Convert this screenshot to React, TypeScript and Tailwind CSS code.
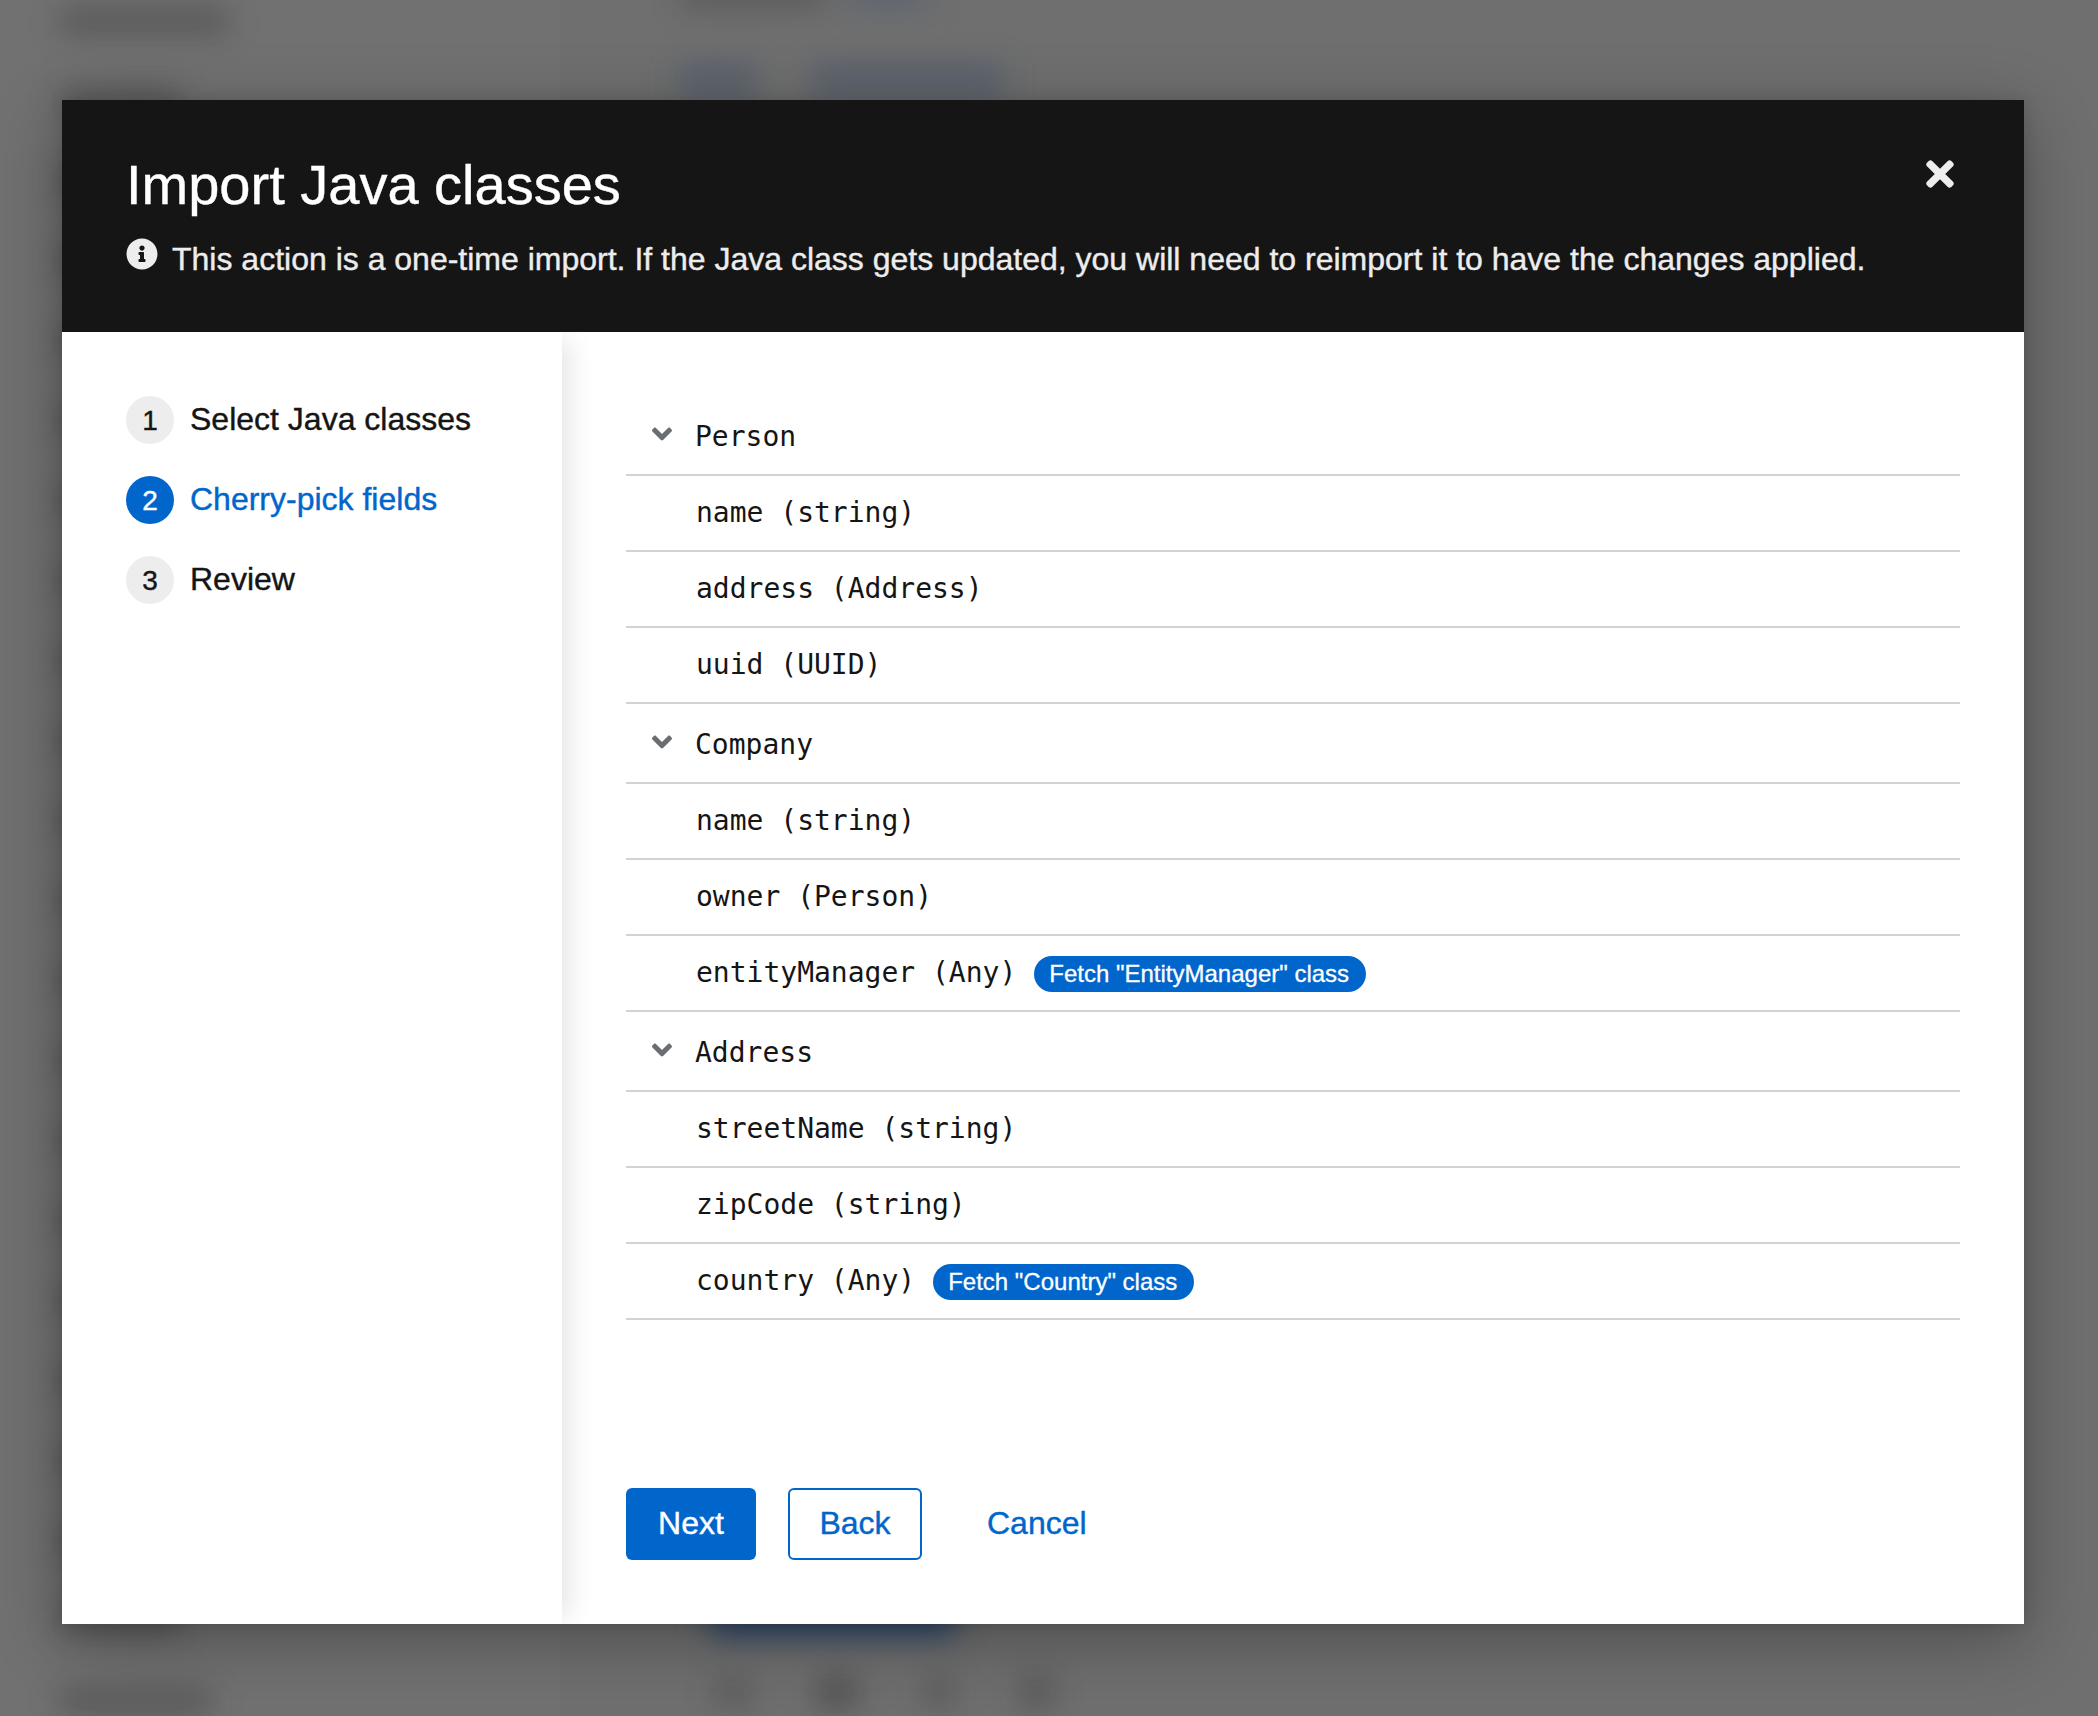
import { FaAngleDown, FaInfoCircle, FaTimes } from "react-icons/fa";

type Field = { label: string; fetch?: string };
type JavaClass = { name: string; fields: Field[] };

const classes: JavaClass[] = [
  {
    name: "Person",
    fields: [{ label: "name (string)" }, { label: "address (Address)" }, { label: "uuid (UUID)" }],
  },
  {
    name: "Company",
    fields: [
      { label: "name (string)" },
      { label: "owner (Person)" },
      { label: "entityManager (Any)", fetch: 'Fetch "EntityManager" class' },
    ],
  },
  {
    name: "Address",
    fields: [
      { label: "streetName (string)" },
      { label: "zipCode (string)" },
      { label: "country (Any)", fetch: 'Fetch "Country" class' },
    ],
  },
];

const steps = ["Select Java classes", "Cherry-pick fields", "Review"];
const activeStep = 1;

// Widths of the navigation entries in the page behind the dialog.
const navWidths = [
  168, 118, 150, 120, 140, 150, 130, 150, 120, 160, 140, 130, 150, 120, 160, 140, 150, 130, 150, 130, 120, 150,
];

function Backdrop() {
  return (
    <div className="absolute inset-0 flex overflow-hidden bg-[#717171]">
      <div className="w-[560px] shrink-0 pl-[60px] blur-[15px]">
        {navWidths.map((width, i) => (
          <div key={i} className="h-20 pt-2">
            <div className="h-[26px] bg-[#151515]/28" style={{ width }} />
          </div>
        ))}
      </div>
      <div className="relative flex-1 bg-black/[0.012]">
        <div className="flex h-full flex-col justify-between pl-[120px] blur-[15px]">
          <div>
            <div className="-mt-3 flex gap-5">
              <div className="h-4 w-[145px] bg-[#151515]/35" />
              <div className="h-4 w-[85px] bg-[#39506f]/50" />
            </div>
            <div className="mt-[60px] flex gap-[56px]">
              <div className="h-[34px] w-[76px] bg-[#3a4f69]/45" />
              <div className="h-[34px] w-[190px] bg-[#3a4f69]/45" />
            </div>
          </div>
          <div>
            <div className="ml-[30px] h-[70px] w-[246px] bg-[#1b3d66]/80" />
            <div className="mt-[40px] mb-[8px] ml-9 flex gap-[68px]">
              <div className="h-[32px] w-[34px] bg-[#151515]/22" />
              <div className="h-[32px] w-[38px] bg-[#151515]/34" />
              <div className="h-[32px] w-[30px] bg-[#151515]/22" />
              <div className="h-[32px] w-[30px] bg-[#151515]/28" />
            </div>
          </div>
        </div>
      </div>
    </div>
  );
}

export default function App() {
  return (
    <div className="relative h-[1716px] w-[2098px] overflow-hidden pt-[100px] pl-[62px] font-['Liberation_Sans',sans-serif] text-[#151515] [-webkit-text-stroke:0.4px]">
      <Backdrop />
      <div
        role="dialog"
        className="relative flex h-[1524px] w-[1962px] flex-col bg-white shadow-[0_16px_64px_rgba(3,3,3,0.3),0_0_14px_rgba(3,3,3,0.12)]"
      >
        <header className="flex h-[232px] shrink-0 justify-between bg-[#151515] pr-16 pl-16">
          <div>
            <h2 className="mt-12 text-[56px] leading-[73px] text-white">Import Java classes</h2>
            <div className="mt-[14px] flex items-start text-[32px] leading-[48px] text-[#ededed]">
              <FaInfoCircle className="mt-[3px] mr-[14px] size-8" />
              <p className="whitespace-nowrap">
                This action is a one-time import. If the Java class gets updated, you will need to reimport it to have
                the changes applied.
              </p>
            </div>
          </div>
          <button aria-label="Close" className="mt-[54px] h-10 text-[40px] text-[#ededed]">
            <FaTimes />
          </button>
        </header>
        <div className="flex min-h-0 flex-1 overflow-hidden">
          <nav className="w-[500px] shrink-0 bg-white pt-16 pl-16 shadow-[16px_0_24px_-8px_rgba(3,3,3,0.1)]">
            <ol className="flex flex-col gap-8">
              {steps.map((step, i) => (
                <li key={step} className="flex h-12 gap-4">
                  <span
                    className={
                      i === activeStep
                        ? "flex size-12 items-center justify-center rounded-full bg-[#0066cc] pt-px text-[28px] text-white"
                        : "flex size-12 items-center justify-center rounded-full bg-[#ededed] pt-px text-[28px]"
                    }
                  >
                    {i + 1}
                  </span>
                  <span
                    className={
                      i === activeStep ? "text-[32px] leading-[46px] text-[#0066cc]" : "text-[32px] leading-[46px]"
                    }
                  >
                    {step}
                  </span>
                </li>
              ))}
            </ol>
          </nav>
          <main className="flex flex-1 flex-col px-16 pt-16 pb-16">
            <div className="flex-1 font-['DejaVu_Sans_Mono',monospace] text-[28px] [-webkit-text-stroke:0]">
              {classes.map((cls) => (
                <section key={cls.name}>
                  <div className="flex h-20 border-b-2 border-[#d2d2d2] pl-5">
                    <FaAngleDown className="mt-[22px] mr-[17px] size-8 text-[#6a6e73]" />
                    <span className="mt-5 leading-[42px]">{cls.name}</span>
                  </div>
                  {cls.fields.map((field) => (
                    <div key={field.label} className="flex h-[76px] border-b-2 border-[#d2d2d2] pl-[70px]">
                      <span className="mt-4 leading-[42px]">{field.label}</span>
                      {field.fetch && (
                        <button className="mt-5 ml-[17.5px] h-9 rounded-full bg-[#0066cc] pr-[16.5px] pl-[15.5px] font-['Liberation_Sans',sans-serif] text-[24px] leading-9 text-white [-webkit-text-stroke:0.3px]">
                          {field.fetch}
                        </button>
                      )}
                    </div>
                  ))}
                </section>
              ))}
            </div>
            <footer className="flex h-[72px] items-start gap-8 text-[32px] leading-[48px]">
              <button className="h-[72px] w-[130px] rounded-md bg-[#0066cc] pb-0.5 text-white">Next</button>
              <button className="h-[72px] w-[134px] rounded-md border-2 border-[#0066cc] pb-0.5 text-[#0066cc]">
                Back
              </button>
              <button className="h-[72px] px-[33px] pb-0.5 text-[#0066cc]">Cancel</button>
            </footer>
          </main>
        </div>
      </div>
    </div>
  );
}
